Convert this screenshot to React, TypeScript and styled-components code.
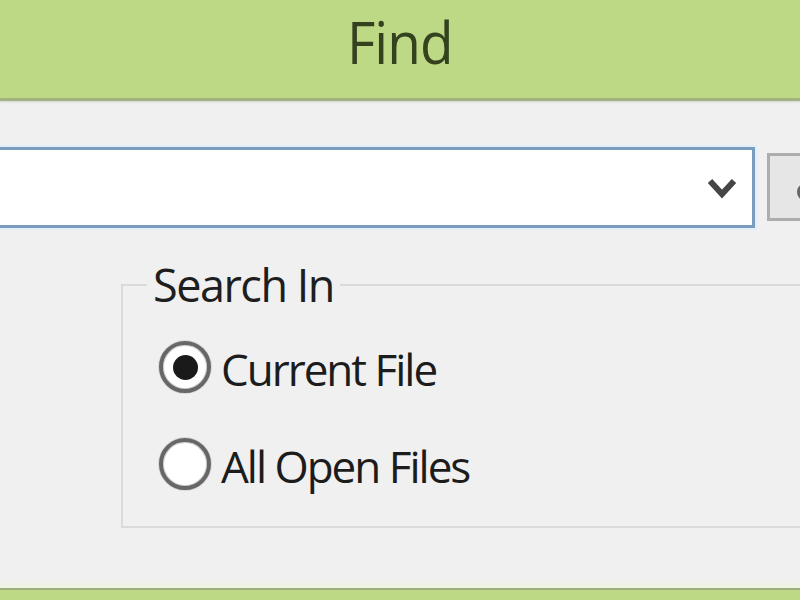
import React from "react";
import styled, { createGlobalStyle } from "styled-components";

const GlobalStyle = createGlobalStyle`
  html, body {
    margin: 0;
    padding: 0;
  }
  body {
    width: 800px;
    height: 600px;
    overflow: hidden;
    background: #f0f0f0;
    font-family: "Open Sans", "Noto Sans", sans-serif;
  }
`;

const Page = styled.div`
  width: 800px;
  height: 600px;
  display: flex;
  flex-direction: column;
  overflow: hidden;
  background: #f0f0f0;
`;

const TitleBar = styled.header`
  flex: 0 0 98px;
  display: flex;
  align-items: center;
  justify-content: center;
  background: #bdd985;
  border-bottom: 3px solid #a2b27f;
  box-shadow: 0 1px 2px rgba(120, 130, 100, 0.25);
  color: #35421f;
  font-size: 59px;
  letter-spacing: -1px;
`;

const TitleText = styled.span`
  display: inline-block;
  transform: scaleX(0.93);
  margin-top: -17px;
`;

const Content = styled.main`
  flex: 1;
  padding-top: 46px;
`;

const ComboRow = styled.div`
  display: flex;
  align-items: flex-start;
  margin-left: -200px;
  gap: 12px;
`;

const Combo = styled.div`
  flex: 0 0 955px;
  height: 81px;
  box-sizing: border-box;
  background: #ffffff;
  border: 3px solid #7b9dbd;
  box-shadow: 0 0 0 2px #e2effb;
  display: flex;
  align-items: center;
  justify-content: flex-end;
  padding-right: 15px;
`;

const SideButton = styled.div`
  flex: 0 0 200px;
  height: 68px;
  margin-top: 6px;
  box-sizing: border-box;
  background: #e6e6e6;
  border: 3px solid #adadad;
  display: flex;
  align-items: center;
  padding: 10px 0 0 27px;

  &::before {
    content: "";
    display: block;
    width: 14px;
    height: 16px;
    border-radius: 50%;
    border: 3px solid #666;
    box-sizing: border-box;
  }
`;

const GroupBox = styled.fieldset`
  margin: 34px 0 0 121px;
  width: 800px;
  box-sizing: border-box;
  border: 2px solid #dadada;
  padding: 34px 0 36px 24px;
  display: flex;
  flex-direction: column;
  gap: 45px;
`;

const Legend = styled.legend`
  font-size: 45px;
  line-height: 45px;
  padding: 0 6px;
  color: #1e1e1e;
  letter-spacing: -1.5px;
`;

const RadioRow = styled.label`
  display: flex;
  align-items: center;
  gap: 10px;
  margin-left: 12px;
  height: 52px;
  font-size: 44px;
  line-height: 56px;
  color: #1c1c1c;
  letter-spacing: -2px;
`;

const RadioCircle = styled.span<{ $checked?: boolean }>`
  flex: 0 0 52px;
  height: 52px;
  box-sizing: border-box;
  border-radius: 50%;
  border: 4px solid #676767;
  box-shadow: inset 0 0 0 1px #cfcfcf, 0 0 0 1px #d8d8d8;
  background: #ffffff;
  display: flex;
  align-items: center;
  justify-content: center;

  &::after {
    content: "";
    display: ${(p) => (p.$checked ? "block" : "none")};
    width: 25px;
    height: 25px;
    border-radius: 50%;
    background: #1a1a1a;
  }
`;

const RadioText = styled.span`
  display: block;
  padding-top: 4px;
`;

const BottomBar = styled.footer`
  flex: 0 0 10px;
  background: #bdd985;
  border-top: 2px solid #9cad80;
  box-shadow: 0 -3px 4px #eef6de;
`;

const Chevron = () => (
  <svg width="30" height="22" viewBox="0 0 30 22">
    <polyline
      points="3,4 15,17 27,4"
      fill="none"
      stroke="#454545"
      strokeWidth="6"
      strokeLinejoin="miter"
    />
  </svg>
);

export default function App() {
  return (
    <>
      <GlobalStyle />
      <Page>
        <TitleBar>
          <TitleText>Find</TitleText>
        </TitleBar>
        <Content>
          <ComboRow>
            <Combo>
              <Chevron />
            </Combo>
            <SideButton />
          </ComboRow>
          <GroupBox>
            <Legend>Search In</Legend>
            <RadioRow>
              <RadioCircle $checked />
              <RadioText>Current File</RadioText>
            </RadioRow>
            <RadioRow>
              <RadioCircle />
              <RadioText>All Open Files</RadioText>
            </RadioRow>
          </GroupBox>
        </Content>
        <BottomBar />
      </Page>
    </>
  );
}
